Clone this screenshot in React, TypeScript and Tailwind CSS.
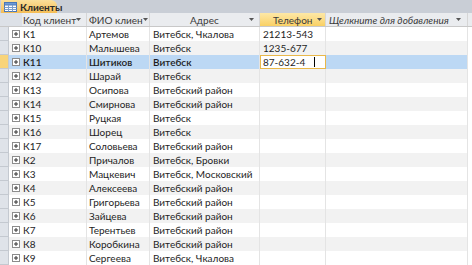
import React from 'react';

type Row = { code: string; name: string; addr: string; phone: string };

const ROWS: Row[] = [
  { code: 'К1', name: 'Артемов', addr: 'Витебск, Чкалова', phone: '21213-543' },
  { code: 'К10', name: 'Малышева', addr: 'Витебск', phone: '1235-677' },
  { code: 'К11', name: 'Шитиков', addr: 'Витебск', phone: '87-632-4' },
  { code: 'К12', name: 'Шарай', addr: 'Витебск', phone: '' },
  { code: 'К13', name: 'Осипова', addr: 'Витебский район', phone: '' },
  { code: 'К14', name: 'Смирнова', addr: 'Витебский район', phone: '' },
  { code: 'К15', name: 'Руцкая', addr: 'Витебск', phone: '' },
  { code: 'К16', name: 'Шорец', addr: 'Витебск', phone: '' },
  { code: 'К17', name: 'Соловьева', addr: 'Витебский район', phone: '' },
  { code: 'К2', name: 'Причалов', addr: 'Витебск, Бровки', phone: '' },
  { code: 'К3', name: 'Мацкевич', addr: 'Витебск, Московский', phone: '' },
  { code: 'К4', name: 'Алексеева', addr: 'Витебский район', phone: '' },
  { code: 'К5', name: 'Григорьева', addr: 'Витебский район', phone: '' },
  { code: 'К6', name: 'Зайцева', addr: 'Витебский район', phone: '' },
  { code: 'К7', name: 'Терентьев', addr: 'Витебский район', phone: '' },
  { code: 'К8', name: 'Коробкина', addr: 'Витебский район', phone: '' },
  { code: 'К9', name: 'Сергеева', addr: 'Витебск, Чкалова', phone: '' },
];

const Arrow = () => (
  <svg width="5" height="3" viewBox="0 0 5 3" className="shrink-0">
    <path d="M0 0h5L2.5 3z" fill="#555" />
  </svg>
);

const TableIcon = () => (
  <svg width="13" height="10" viewBox="0 0 13 10" className="shrink-0">
    <rect x="0.5" y="0.5" width="12" height="9" fill="#fff" stroke="#4a78b8" />
    <rect x="0.5" y="0.5" width="12" height="2.5" fill="#6f9bd6" stroke="#4a78b8" />
    <path d="M4.5 3v6.5M8.5 3v6.5M0.5 5.5h12M0.5 7.5h12" stroke="#7e9fcb" strokeWidth="1" />
  </svg>
);

const Plus = () => (
  <span className="flex h-[8px] w-[8px] items-center justify-center border border-[#8c8c8c] bg-white">
    <svg width="6" height="6" viewBox="0 0 6 6">
      <path d="M1 3h4M3 1v4" stroke="#333" strokeWidth="1" />
    </svg>
  </span>
);

const cell = 'flex shrink-0 items-center overflow-hidden whitespace-nowrap';

const App: React.FC = () => {
  return (
    <div className="h-[265px] w-[472px] overflow-hidden bg-white text-[10px] leading-none text-[#1e1e1e] font-['Lato','Open_Sans',sans-serif]">
      {/* tab strip */}
      <div className="flex h-[13px] items-end bg-[#c9ced6]">
        <div className="ml-[1px] flex h-[13px] w-[56px] items-center gap-[3px] rounded-tr-[6px] bg-gradient-to-b from-[#fbe09a] to-[#f4bd55] pl-[3px]">
          <TableIcon />
          <span className="whitespace-nowrap text-[10px] font-bold text-[#2a2a2a]">Клиенты</span>
        </div>
      </div>

      {/* header */}
      <div className="flex h-[14px] border-b border-[#c8c8c8] bg-[#eaecef] text-[#3a3a3a]">
        <div className="w-[22px] shrink-0 bg-[#dde1e7]" />
        <div className={`${cell} w-[65px] justify-between border-r border-[#d6d6d6] pl-[1px] pr-[5px]`}>
          <span>Код клиент</span>
          <Arrow />
        </div>
        <div className={`${cell} w-[63px] justify-between border-r border-[#d6d6d6] pl-[2px] pr-[5px]`}>
          <span>ФИО клиен</span>
          <Arrow />
        </div>
        <div className={`${cell} w-[110px] justify-between border-r border-[#d6d6d6] pl-[40px] pr-[5px]`}>
          <span>Адрес</span>
          <Arrow />
        </div>
        <div className={`${cell} w-[66px] justify-between border-r border-[#d6d6d6] bg-gradient-to-b from-[#fde8a6] to-[#f9d063] pl-[13px] pr-[3px]`}>
          <span>Телефон</span>
          <Arrow />
        </div>
        <div className={`${cell} w-[142px] justify-between border-r border-[#d6d6d6] pl-[3px] pr-[6px]`}>
          <span className="italic">Щелкните для добавления</span>
          <Arrow />
        </div>
        <div className="flex-1" />
      </div>

      {/* rows */}
      {ROWS.map((r, i) => {
        const selected = i === 2;
        const bg = selected ? 'bg-[#bcd8f4]' : i % 2 ? 'bg-[#f2f2f2]' : 'bg-white';
        const weight = selected ? 'font-semibold' : '';
        return (
          <div key={r.code} className={`flex h-[14px] ${bg}`}>
            <div
              className={`w-[9px] shrink-0 border-b border-r border-[#c4c9d0] ${
                selected ? 'bg-[#f8d47a]' : 'bg-[#dfe3e9]'
              }`}
            />
            <div className="flex w-[13px] shrink-0 items-center justify-center">
              <Plus />
            </div>
            <div className={`${cell} w-[65px] border-r border-[#e4e4e4] pl-[1px] ${weight}`}>{r.code}</div>
            <div className={`${cell} w-[63px] border-r border-[#e4e4e4] pl-[2px] ${weight}`}>{r.name}</div>
            <div className={`${cell} w-[110px] border-r border-[#e4e4e4] pl-[3px] ${weight}`}>{r.addr}</div>
            {selected ? (
              <div className={`${cell} w-[66px] border border-[#e9b84a] bg-white pl-[2px]`}>
                <span>{r.phone}</span>
                <span className="ml-auto mr-[10px] h-[10px] w-[1px] bg-black" />
              </div>
            ) : (
              <div className={`${cell} w-[66px] border-r border-[#e4e4e4] pl-[3px]`}>{r.phone}</div>
            )}
            <div className="w-[142px] shrink-0 border-r border-[#e4e4e4]" />
            <div className="flex-1 bg-white" />
          </div>
        );
      })}
    </div>
  );
};

export default App;
